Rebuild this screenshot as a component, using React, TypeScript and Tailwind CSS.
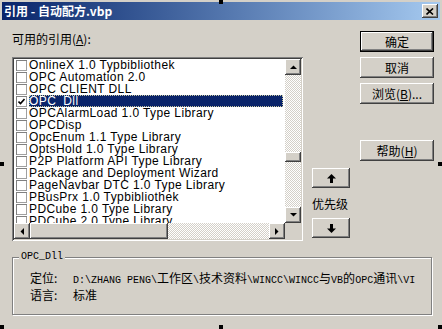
import React from "react";

const refs = [
  "OnlineX 1.0 Typbibliothek",
  "OPC Automation 2.0",
  "OPC CLIENT DLL",
  "OPC_Dll",
  "OPCAlarmLoad 1.0 Type Library",
  "OPCDisp",
  "OpcEnum 1.1 Type Library",
  "OptsHold 1.0 Type Library",
  "P2P Platform API Type Library",
  "Package and Deployment Wizard",
  "PageNavbar DTC 1.0 Type Library",
  "PBusPrx 1.0 Typbibliothek",
  "PDCube 1.0 Type Library",
  "PDCube 2.0 Type Library",
];

const raised =
  "bg-[#d4d0c8] shadow-[inset_-1px_-1px_#404040,inset_1px_1px_#ffffff,inset_-2px_-2px_#808080,inset_2px_2px_#d4d0c8]";

const checker =
  "bg-[repeating-conic-gradient(#ffffff_0_25%,#d4d0c8_0_50%)] bg-[length:2px_2px]";

const Tri = ({ dir }: { dir: "up" | "down" | "left" | "right" }) => {
  const pts = {
    up: "0,4 3.5,0.5 7,4",
    down: "0,0 7,0 3.5,3.5",
    left: "4,0 4,7 0.5,3.5",
    right: "0,0 0,7 3.5,3.5",
  }[dir];
  const vert = dir === "up" || dir === "down";
  return (
    <svg width={vert ? 7 : 4} height={vert ? 4 : 7} viewBox={vert ? "0 0 7 4" : "0 0 4 7"}>
      <polygon points={pts} fill="#000" />
    </svg>
  );
};

const ScrollBtn = ({ dir }: { dir: "up" | "down" | "left" | "right" }) => (
  <div className={`${raised} w-[16px] h-[16px] flex items-center justify-center shrink-0`}>
    <Tri dir={dir} />
  </div>
);

const BigArrow = ({ up }: { up?: boolean }) => (
  <svg width="9" height="9" viewBox="0 0 9 9">
    {up ? (
      <>
        <polygon points="0,4.5 4.5,0 9,4.5" fill="#000" />
        <rect x="3" y="4" width="3" height="5" fill="#000" />
      </>
    ) : (
      <>
        <rect x="3" y="0" width="3" height="5" fill="#000" />
        <polygon points="0,4.5 9,4.5 4.5,9" fill="#000" />
      </>
    )}
  </svg>
);

const Btn = ({ children, def }: { children: React.ReactNode; def?: boolean }) => (
  <div
    className={`${def ? "border border-black" : ""} w-[74px] h-[21px] shrink-0`}
  >
    <div className={`${raised} w-full h-full flex items-center justify-center text-[12px] leading-none text-black`}>
      {children}
    </div>
  </div>
);

const Mixed = ({ text }: { text: string }) => {
  const parts = text.match(/[\x00-\x7f]+|[^\x00-\x7f]+/g) || [];
  return (
    <span className="whitespace-pre">
      {parts.map((p, i) =>
        /[\x00-\x7f]/.test(p[0]) ? (
          <span key={i} className="font-['Liberation_Mono',monospace] text-[10px]">
            {p}
          </span>
        ) : (
          <span key={i} className="text-[12px]">
            {p}
          </span>
        )
      )}
    </span>
  );
};

const Handle = ({ className }: { className: string }) => (
  <div className={`absolute w-[4px] h-[4px] bg-black ${className}`} />
);

export default function App() {
  return (
    <div className="relative w-[442px] h-[329px] bg-[#d4d0c8] overflow-hidden pt-[2px] font-['Liberation_Sans','Noto_Sans_CJK_SC',sans-serif] text-black">
      {/* title bar */}
      <div className="h-[18px] mx-[2px] bg-gradient-to-r from-[#0a246a] to-[#a6caf0] flex items-center justify-between pl-[2px] pr-[2px]">
        <span className="text-white font-bold text-[12px] leading-none font-['Noto_Sans_CJK_SC',sans-serif]">
          引用 - 自动配方.vbp
        </span>
        <div className={`${raised} w-[16px] h-[14px] flex items-center justify-center`}>
          <svg width="8" height="7" viewBox="0 0 8 7">
            <path d="M0.5 0.5 L7 6.5 M7 0.5 L0.5 6.5" stroke="#000" strokeWidth="1.6" />
          </svg>
        </div>
      </div>

      {/* body */}
      <div className="flex pt-[11px]">
        <div className="pl-[12px] w-[303px] shrink-0">
          <div className="h-[14px] mt-[1px] text-[12px] leading-[14px] font-['Noto_Sans_CJK_SC',sans-serif]">
            可用的引用(<span className="underline">A</span>):
          </div>
          <div className="mt-[11px] w-[291px] h-[184px] bg-white p-[2px] shadow-[inset_1px_1px_#808080,inset_-1px_-1px_#ffffff,inset_2px_2px_#404040,inset_-2px_-2px_#d4d0c8]">
            <div className="flex h-[164px]">
              <div className="w-[271px] overflow-hidden">
                {refs.map((r, i) => (
                  <div key={r} className="h-[12px] flex items-center">
                    <div className="ml-[2px] w-[11px] h-[11px] bg-white shrink-0 shadow-[inset_1px_1px_#808080,inset_-1px_-1px_#a0a0a0] flex items-center justify-center">
                      {i === 3 && (
                        <svg width="7" height="7" viewBox="0 0 7 7">
                          <path d="M0.5 3.5 L2.5 5.5 L6.5 1" stroke="#000" strokeWidth="1.6" fill="none" />
                        </svg>
                      )}
                    </div>
                    <span
                      className={`ml-[2px] text-[12px] tracking-[0.4px] leading-[12px] h-[12px] whitespace-nowrap ${
                        i === 3
                          ? "bg-[#0a246a] text-white w-[254px] outline-1 outline-dotted outline-[#c8c8a0] -outline-offset-1"
                          : ""
                      }`}
                    >
                      {r}
                    </span>
                  </div>
                ))}
              </div>
              <div className="w-[16px] flex flex-col">
                <ScrollBtn dir="up" />
                <div className={`${checker} flex-1 flex flex-col`}>
                  <div className="h-[77px]" />
                  <div className={`${raised} h-[10px]`} />
                </div>
                <ScrollBtn dir="down" />
              </div>
            </div>
            <div className="flex h-[16px]">
              <ScrollBtn dir="left" />
              <div className={`${checker} w-[239px] flex`}>
                <div className={`${raised} w-[138px]`} />
              </div>
              <ScrollBtn dir="right" />
              <div className="w-[16px] bg-[#d4d0c8]" />
            </div>
          </div>
        </div>

        {/* priority */}
        <div className="ml-[9px] mt-[137px] w-[38px] flex flex-col items-start">
          <div className={`${raised} w-[38px] h-[20px] flex items-center justify-center`}>
            <BigArrow up />
          </div>
          <div className="h-[12px] mt-[10px] text-[12px] leading-[12px] font-['Noto_Sans_CJK_SC',sans-serif]">
            优先级
          </div>
          <div className={`${raised} w-[38px] h-[20px] mt-[8px] flex items-center justify-center`}>
            <BigArrow />
          </div>
        </div>

        {/* buttons */}
        <div className="ml-[10px] flex flex-col gap-[5px] font-['Noto_Sans_CJK_SC',sans-serif]">
          <Btn def>确定</Btn>
          <Btn>取消</Btn>
          <Btn>
            浏览(<span className="underline">B</span>)...
          </Btn>
          <div className="mt-[31px]">
            <Btn>
              帮助(<span className="underline">H</span>)
            </Btn>
          </div>
        </div>
      </div>

      {/* group box */}
      <div className="relative ml-[12px] mt-[16px] w-[420px] h-[58px] border border-[#808080] shadow-[inset_1px_1px_#ffffff,1px_1px_#ffffff] font-['Noto_Sans_CJK_SC',sans-serif]">
        <div className="absolute -top-[7px] left-[6px] px-[2px] bg-[#d4d0c8] font-['Liberation_Mono',monospace] text-[10px] leading-[12px]">
          OPC_Dll
        </div>
        <div className="pt-[14px] pl-[17px] flex flex-col gap-[5px]">
          <div className="flex items-center h-[12px] leading-[12px]">
            <span className="w-[43px] text-[12px]">定位:</span>
            <Mixed text="D:\ZHANG PENG\工作区\技术资料\WINCC\WINCC与VB的OPC通讯\VI" />
          </div>
          <div className="flex items-center h-[12px] leading-[12px]">
            <span className="w-[43px] text-[12px]">语言:</span>
            <span className="text-[12px]">标准</span>
          </div>
        </div>
      </div>

      <Handle className="top-0 left-[219px]" />
      <Handle className="top-[162px] left-0" />
      <Handle className="top-[162px] left-[438px]" />
      <Handle className="top-[325px] left-0" />
      <Handle className="top-[325px] left-[219px]" />
      <Handle className="top-[325px] left-[438px]" />
    </div>
  );
}
